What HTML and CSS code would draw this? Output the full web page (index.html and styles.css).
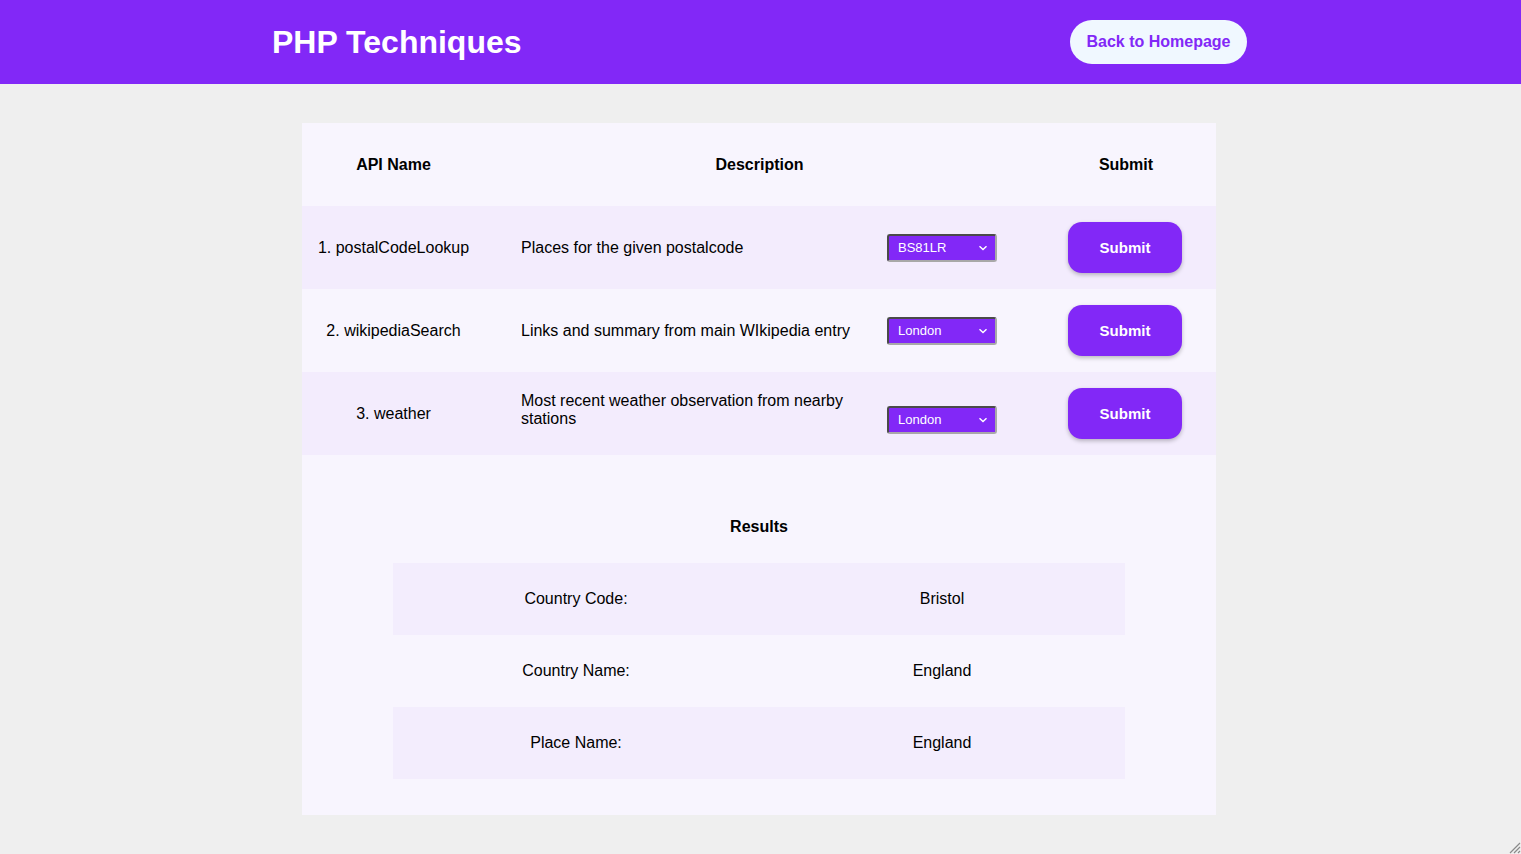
FILE: index.html
```html
<!DOCTYPE html>
<html lang="en">
<head>
<meta charset="utf-8">
<title>PHP Techniques</title>
<link rel="stylesheet" href="styles.css">
</head>
<body>
<header class="topbar">
  <h1 class="title">PHP Techniques</h1>
  <a class="home-btn" href="#">Back to Homepage</a>
</header>

<main class="panel">
  <div class="api-table">
    <div class="row head">
      <div class="cell c-name">API Name</div>
      <div class="cell c-headdesc">Description</div>
      <div class="cell c-submit">Submit</div>
    </div>

    <div class="row shaded">
      <div class="cell c-name">1. postalCodeLookup</div>
      <div class="cell c-desc">Places for the given postalcode</div>
      <div class="cell c-select"><select class="sel"><option>BS81LR</option></select></div>
      <div class="cell c-submit"><button class="submit">Submit</button></div>
    </div>

    <div class="row">
      <div class="cell c-name">2. wikipediaSearch</div>
      <div class="cell c-desc">Links and summary from main WIkipedia entry</div>
      <div class="cell c-select"><select class="sel"><option>London</option></select></div>
      <div class="cell c-submit"><button class="submit">Submit</button></div>
    </div>

    <div class="row shaded">
      <div class="cell c-name">3. weather</div>
      <div class="cell c-desc lifted">Most recent weather observation from nearby stations</div>
      <div class="cell c-select dropped"><select class="sel"><option>London</option></select></div>
      <div class="cell c-submit"><button class="submit">Submit</button></div>
    </div>
  </div>

  <section class="results">
    <h2 class="results-title">Results</h2>
    <div class="res-table">
      <div class="res-row shaded">
        <div class="res-cell">Country Code:</div>
        <div class="res-cell">Bristol</div>
      </div>
      <div class="res-row">
        <div class="res-cell">Country Name:</div>
        <div class="res-cell">England</div>
      </div>
      <div class="res-row shaded">
        <div class="res-cell">Place Name:</div>
        <div class="res-cell">England</div>
      </div>
    </div>
  </section>
</main>

<svg class="grip" width="14" height="14" viewBox="0 0 14 14" aria-hidden="true">
  <path d="M13 3 L3 13 M13 7 L7 13 M13 11 L11 13" stroke="#8a8a8a" stroke-width="1.2" fill="none"/>
</svg>
</body>
</html>
```

FILE: styles.css
```css
* { box-sizing: border-box; }

html, body {
  margin: 0;
  padding: 0;
}

body {
  background: #efefef;
  font-family: "Liberation Sans", Arial, sans-serif;
  font-size: 16px;
  color: #000;
  min-height: 854px;
}

.topbar {
  height: 84px;
  background: #8228f7;
  display: flex;
  align-items: center;
  justify-content: space-between;
  padding: 0 274px 0 272px;
}

.title {
  margin: 0;
  color: #fff;
  font-size: 32px;
  font-weight: bold;
}

.home-btn {
  display: flex;
  align-items: center;
  justify-content: center;
  width: 177px;
  height: 44px;
  border-radius: 22px;
  background: #f0f8ff;
  color: #8228f7;
  font-weight: bold;
  font-size: 16px;
  text-decoration: none;
}

.panel {
  width: 914px;
  margin: 39px 0 0 calc((100% - 914px) / 2 - 1.5px);
  background: #f8f5fe;
  padding-bottom: 36px;
}

.row {
  display: grid;
  grid-template-columns: 183px 402px 147px 182px;
  height: 83px;
  align-items: center;
}

.row.shaded { background: #f3ecfd; }

.row.head { font-weight: bold; }

.cell { min-width: 0; }

.c-name { text-align: center; }

.c-headdesc {
  grid-column: 2 / span 2;
  text-align: center;
}

.c-submit {
  text-align: center;
  display: flex;
  justify-content: center;
}

.row.head .c-submit { padding-left: 2px; }

.c-desc {
  padding-left: 36px;
  padding-right: 30px;
  line-height: 18px;
}

.c-desc.lifted { margin-top: -8px; }

.c-select { display: flex; align-items: center; }

.c-select.dropped { margin-top: 12px; }

.sel {
  -webkit-appearance: none;
  appearance: none;
  width: 110px;
  height: 28px;
  padding: 0 0 0 9px;
  background-color: #8228f7;
  background-image: url("data:image/svg+xml;utf8,<svg xmlns='http://www.w3.org/2000/svg' width='10' height='6' viewBox='0 0 10 6'><path d='M1.5 1.2 L5 4.6 L8.5 1.2' stroke='white' stroke-width='1.4' fill='none'/></svg>");
  background-repeat: no-repeat;
  background-position: right 7px center;
  color: #fff;
  font-family: "Liberation Sans", Arial, sans-serif;
  font-size: 13px;
  border-style: solid;
  border-width: 2px;
  border-color: #4a4a4a #a8a8a8 #a8a8a8 #4a4a4a;
  border-radius: 3px;
}

.submit {
  width: 114px;
  height: 51px;
  border: none;
  border-radius: 14px;
  background: #8228f7;
  color: #fff;
  font-family: "Liberation Sans", Arial, sans-serif;
  font-weight: bold;
  font-size: 15px;
  box-shadow: 0 2px 4px rgba(0, 0, 0, 0.25);
}

.results {
  padding-top: 63px;
}

.results-title {
  margin: 0 0 27px;
  font-size: 16px;
  font-weight: bold;
  text-align: center;
  line-height: 18px;
}

.res-table {
  width: 732px;
  margin: 0 auto;
}

.res-row {
  display: grid;
  grid-template-columns: 366px 366px;
  height: 72px;
  align-items: center;
}

.res-row.shaded { background: #f3edfd; }

.res-cell { text-align: center; }

.grip {
  position: fixed;
  right: 0;
  bottom: 0;
}
```
